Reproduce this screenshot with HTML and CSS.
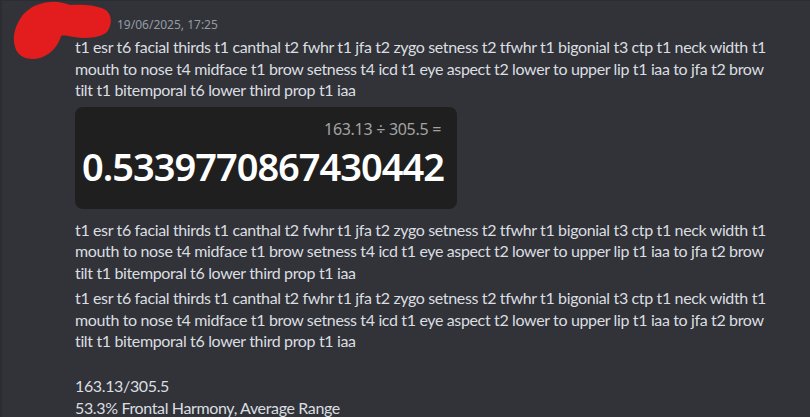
FILE: index.html
```html
<!DOCTYPE html>
<html>
<head>
<meta charset="utf-8">
<link rel="stylesheet" href="styles.css">
</head>
<body>
<div class="chat">
  <div class="message first">
    <div class="header">
      <span class="username">user</span>
      <span class="timestamp">19/06/2025, 17:25</span>
    </div>
    <div class="content">t1 esr t6 facial thirds t1 canthal t2 fwhr t1 jfa t2 zygo setness t2 tfwhr t1 bigonial t3 ctp t1 neck width t1 mouth to nose t4 midface t1 brow setness t4 icd t1 eye aspect t2 lower to upper lip t1 iaa to jfa t2 brow tilt t1 bitemporal t6 lower third prop t1 iaa</div>
    <div class="calc">
      <div class="calc-expr">163.13 ÷ 305.5 =</div>
      <div class="calc-result">0.5339770867430442</div>
    </div>
    <svg class="scribble" width="120" height="64" viewBox="0 0 120 64">
      <path d="M40 4 C52 0 62 2 70 5 C82 4 96 5 104 9 C112 13 113 24 107 32 C100 38 86 39 74 37 C68 36 64 35 61 36 C59 44 52 54 40 58 C28 61 18 57 15 47 C12 37 15 26 22 16 C28 9 33 6 40 4 Z" fill="#e31d1d"/>
    </svg>
  </div>
  <div class="message">
    <div class="content">t1 esr t6 facial thirds t1 canthal t2 fwhr t1 jfa t2 zygo setness t2 tfwhr t1 bigonial t3 ctp t1 neck width t1 mouth to nose t4 midface t1 brow setness t4 icd t1 eye aspect t2 lower to upper lip t1 iaa to jfa t2 brow tilt t1 bitemporal t6 lower third prop t1 iaa</div>
  </div>
  <div class="message">
    <div class="content">t1 esr t6 facial thirds t1 canthal t2 fwhr t1 jfa t2 zygo setness t2 tfwhr t1 bigonial t3 ctp t1 neck width t1 mouth to nose t4 midface t1 brow setness t4 icd t1 eye aspect t2 lower to upper lip t1 iaa to jfa t2 brow tilt t1 bitemporal t6 lower third prop t1 iaa</div>
    <div class="content summary">163.13/305.5<br>53.3% Frontal Harmony, Average Range</div>
  </div>
</div>
</body>
</html>
```
FILE: styles.css
```css
html, body {
  margin: 0;
  padding: 0;
  background: #313338;
  height: 100%;
  overflow: hidden;
}
body {
  font-family: "Lato", "Noto Sans", sans-serif;
  color: #dbdee1;
  border-top: 1px solid #2b2d31;
  border-left: 2px solid #2b2d31;
  box-sizing: border-box;
}
.chat {
  display: flex;
  flex-direction: column;
  gap: 2px;
  padding-top: 11px;
}
.message {
  position: relative;
  padding-left: 73px;
  padding-right: 30px;
}
.header {
  display: flex;
  align-items: baseline;
  gap: 8px;
  height: 22px;
  line-height: 22px;
}
.username {
  font-size: 16px;
  font-weight: 600;
  color: #f2f3f5;
  width: 34px;
  overflow: hidden;
}
.timestamp {
  font-family: "Noto Sans", sans-serif;
  font-size: 12px;
  color: #949ba4;
}
.content {
  font-size: 16px;
  line-height: 21.5px;
  letter-spacing: -0.36px;
  width: 700px;
  margin-top: 2px;
}
.content.summary {
  margin-top: 23.5px;
}
.calc {
  margin-top: 6px;
  margin-bottom: 6px;
  width: 382px;
  height: 102px;
  box-sizing: border-box;
  background: #1f1f20;
  border-radius: 8px;
  padding: 10px 16px 0 7px;
  display: flex;
  flex-direction: column;
  align-items: flex-end;
  font-family: "Noto Sans", sans-serif;
}
.calc-expr {
  font-size: 16px;
  line-height: 24px;
  color: #a3a3a3;
  letter-spacing: -0.3px;
}
.calc-result {
  font-size: 38px;
  line-height: 50px;
  font-weight: 600;
  color: #ffffff;
  letter-spacing: -1px;
  align-self: stretch;
}
.scribble {
  position: absolute;
  left: -2px;
  top: -12px;
}
```
